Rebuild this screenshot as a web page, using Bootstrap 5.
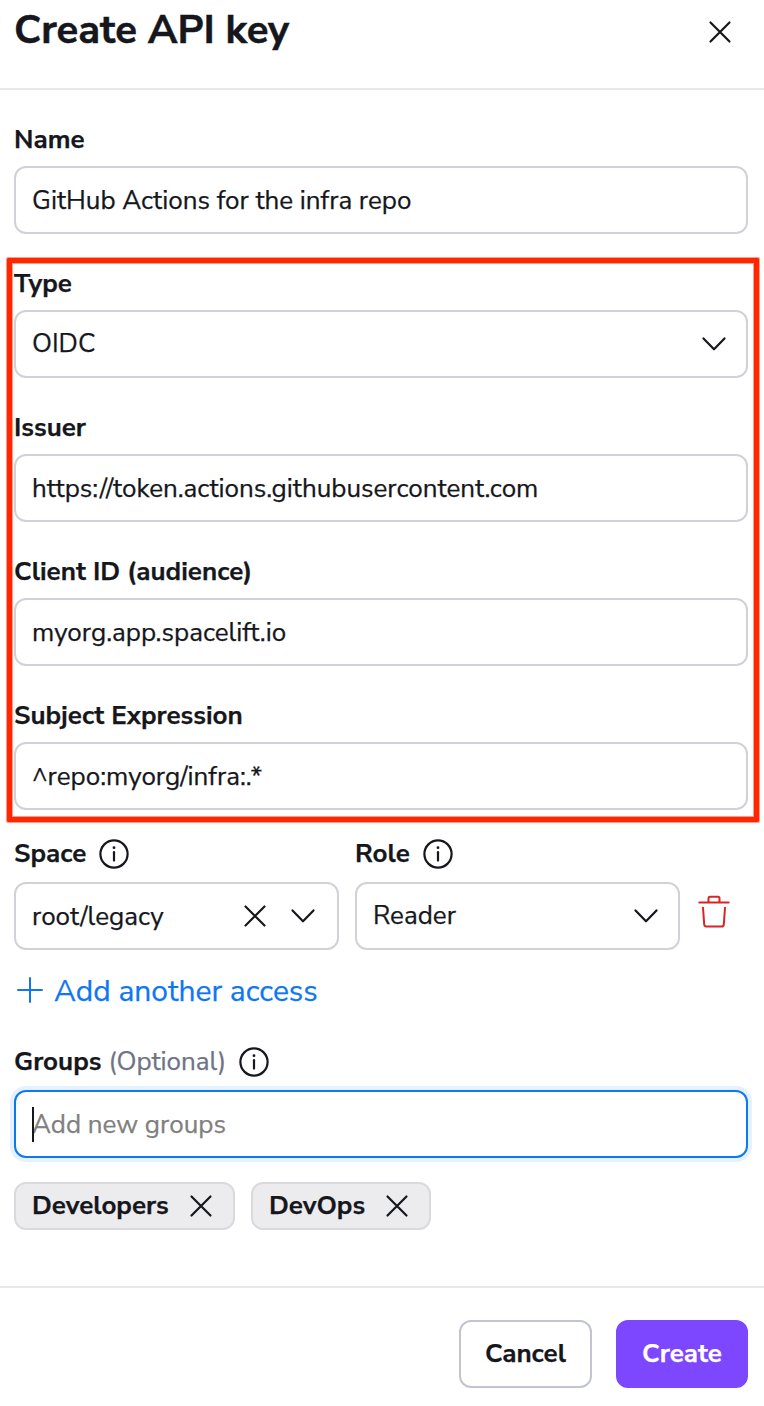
<!DOCTYPE html>
<html lang="en">
<head>
<meta charset="utf-8">
<meta name="viewport" content="width=device-width, initial-scale=1">
<title>Create API key</title>
<link rel="stylesheet" href="https://cdn.jsdelivr.net/npm/bootstrap@5.3.0/dist/css/bootstrap.min.css">
<style>
  body { font-family: "Nunito Sans", Lato, "Open Sans", sans-serif; font-size: 26px; color: #15171c; background: #fff; line-height: 1.2; overflow: hidden; -webkit-text-stroke: .25px currentColor; }
  svg { fill: none; stroke: currentColor; stroke-linecap: round; stroke-linejoin: round; flex: none; display: block; }

  .drawer-head { height: 90px; border-bottom: 2px solid #e8e8ed; padding: 0 32px 0 14px; }
  .drawer-head h1 { font-size: 40px; font-weight: 700; line-height: 60px; margin: 0; -webkit-text-stroke-width: .5px; }
  .drawer-head .dismiss { margin-top: 20px; }
  .drawer-body { height: 1196px; padding: 32px 16px 0 14px; }
  .drawer-foot { height: 120px; border-top: 2px solid #e8e8ed; padding: 32px 16px 0 0; gap: 24px; }

  .field-label { display: flex; align-items: center; height: 36px; margin: 0 0 8px; font-weight: 700; line-height: 36px; white-space: pre; }
  .field-label.with-icon { margin-bottom: 10px; }
  .field-label svg { margin-left: 13px; }
  .optional { font-weight: 400; color: #6f7385; }

  .form-control, .picker { height: 68px; border: 2px solid #d1d1da; border-radius: 12px; padding: 0 16px; font-size: 26px; color: #15171c; background: #fff; line-height: 1.2; }
  .picker { display: flex; align-items: center; padding: 0 19px 0 16px; }
  .picker > span { flex: 1; padding-bottom: 1px; }
  .picker.clearable { padding-right: 21px; }
  .picker.clearable > span { padding: 1px 0 0; }
  .picker .clear { margin-right: 23px; }
  .form-control.active-field, .form-control.active-field:focus { border-color: #0f77f0; box-shadow: 0 0 0 4px #e4f1fe; }
  .form-control::placeholder { color: #808080; opacity: 1; }
  .caret-bar { position: absolute; left: 18px; top: 17px; width: 2px; height: 35px; background: #15171c; }

  .stack { display: flex; flex-direction: column; gap: 32px; }
  .marked { position: relative; margin-top: 32px; }
  .marked::after { content: ""; position: absolute; left: -7px; right: -11px; top: -8px; bottom: -12px; border: 5px solid #ff2600; border-radius: 1px; box-shadow: 0 0 0 1px rgba(255,38,0,.45), inset 0 0 0 1px rgba(255,38,0,.45); pointer-events: none; }
  .access-row { margin-top: 26px; gap: 16px; }
  .access-row > .col-pick { width: 325px; }
  .remove { color: #dc2323; margin: 59px 0 0 2px; }
  .add-link { height: 40px; margin-top: 20px; font-size: 30px; line-height: 40px; color: #0f77f0; text-decoration: none; gap: 11px; padding-left: 3px; width: max-content; }
  .add-link span { padding-top: 3px; }
  .groups { margin-top: 34px; }

  .chip { height: 48px; border: 2px solid #d9d9de; border-radius: 12px; background: #ececef; padding: 0 20px 1px 16px; font-weight: 700; }
  .chip svg { position: relative; top: .5px; margin-left: auto; }
  .chip-a { width: 221px; }
  .chip-b { width: 180px; }

  .btn { height: 68px; border-radius: 12px; border: 2px solid #c2c5d0; font-size: 26px; font-weight: 700; padding: 0; color: #15171c; line-height: 1.2; }
  .btn-cancel { width: 133px; }
  .btn-create { width: 132px; background: #7d47ff; border-color: #7d47ff; color: #fff; }
</style>
</head>
<body>
<svg width="0" height="0" class="position-absolute" aria-hidden="true">
  <symbol id="i-x" viewBox="0 0 24 24"><path d="M2.5 2.5 21.5 21.5M21.5 2.5 2.5 21.5"/></symbol>
  <symbol id="i-down" viewBox="0 0 26 16"><path d="M2.5 2.4 13 13.3 23.5 2.4"/></symbol>
  <symbol id="i-info" viewBox="0 0 30 30"><circle cx="15" cy="15" r="13.6"/><path d="M15 13.2V21.6"/><circle cx="15" cy="8.7" r=".7" fill="currentColor" stroke-width="1.4"/></symbol>
</svg>

<header class="drawer-head d-flex justify-content-between align-items-start">
  <h1>Create API key</h1>
  <svg class="dismiss" width="24" height="24" stroke-width="2.2"><use href="#i-x"/></svg>
</header>

<main class="drawer-body">
  <div>
    <label class="field-label" for="name">Name</label>
    <input id="name" class="form-control" value="GitHub Actions for the infra repo">
  </div>

  <div class="marked stack">
    <div>
      <div class="field-label">Type</div>
      <div class="picker"><span>OIDC</span><svg width="26" height="16" stroke-width="2.2"><use href="#i-down"/></svg></div>
    </div>
    <div>
      <label class="field-label" for="issuer">Issuer</label>
      <input id="issuer" class="form-control" value="https://token.actions.githubusercontent.com">
    </div>
    <div>
      <label class="field-label" for="client">Client ID (audience)</label>
      <input id="client" class="form-control" value="myorg.app.spacelift.io">
    </div>
    <div>
      <label class="field-label" for="subject">Subject Expression</label>
      <input id="subject" class="form-control" value="^repo:myorg/infra:.*">
    </div>
  </div>

  <div class="access-row d-flex">
    <div class="col-pick">
      <div class="field-label with-icon"><span>Space</span><svg width="30" height="30" stroke-width="2.2"><use href="#i-info"/></svg></div>
      <div class="picker clearable"><span>root/legacy</span><svg class="clear" width="24" height="24" stroke-width="2.2"><use href="#i-x"/></svg><svg width="26" height="16" stroke-width="2.2"><use href="#i-down"/></svg></div>
    </div>
    <div class="col-pick">
      <div class="field-label with-icon"><span>Role</span><svg width="30" height="30" stroke-width="2.2"><use href="#i-info"/></svg></div>
      <div class="picker"><span>Reader</span><svg width="26" height="16" stroke-width="2.2"><use href="#i-down"/></svg></div>
    </div>
    <svg class="remove" width="32" height="34" viewBox="0 0 32 34" stroke-width="2"><path d="M1.3 7.5H30.7M10.5 7V3.4Q10.5 1.8 12 1.8H20Q21.5 1.8 21.5 3.4V7M5 12.7 6.2 29.3Q6.4 31.6 8.7 31.6H23.3Q25.6 31.6 25.8 29.3L27 12.7"/></svg>
  </div>

  <a href="#" class="add-link d-flex align-items-center"><svg width="26" height="26" stroke-width="2"><path d="M13 1V25M1 13H25"/></svg><span>Add another access</span></a>

  <div class="groups">
    <div class="field-label with-icon"><span>Groups </span><span class="optional">(Optional)</span><svg width="30" height="30" stroke-width="2.2"><use href="#i-info"/></svg></div>
    <div class="position-relative">
      <input class="form-control active-field" placeholder="Add new groups" aria-label="Add new groups">
      <span class="caret-bar"></span>
    </div>
    <div class="d-flex gap-3 mt-4">
      <div class="chip chip-a d-flex align-items-center"><span>Developers</span><svg width="24" height="24" stroke-width="2.2"><use href="#i-x"/></svg></div>
      <div class="chip chip-b d-flex align-items-center"><span>DevOps</span><svg width="24" height="24" stroke-width="2.2"><use href="#i-x"/></svg></div>
    </div>
  </div>
</main>

<footer class="drawer-foot d-flex justify-content-end align-items-start">
  <button class="btn btn-cancel">Cancel</button>
  <button class="btn btn-create">Create</button>
</footer>
<script src="https://cdn.jsdelivr.net/npm/bootstrap@5.3.0/dist/js/bootstrap.bundle.min.js"></script>
</body>
</html>
